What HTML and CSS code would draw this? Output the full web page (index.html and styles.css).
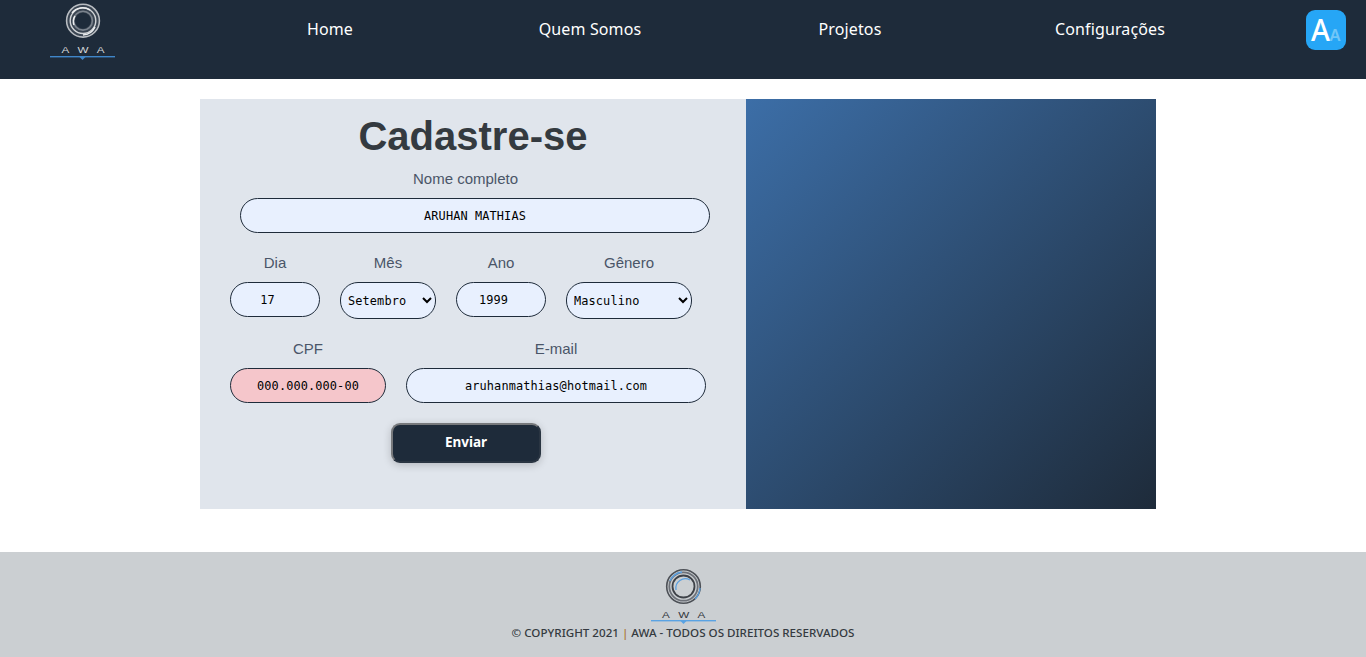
FILE: index.html
```html
<!DOCTYPE html>
<html lang="pt-BR">
<head>
<meta charset="utf-8">
<title>AWA - Cadastre-se</title>
<link rel="stylesheet" href="styles.css">
</head>
<body>
<header class="topbar">
  <a class="brand" href="#">
    <svg class="logo logo-light" width="65" height="62" viewBox="0 0 65 62">
      <circle class="band" cx="33" cy="20.7" r="12"/>
      <circle class="r1" cx="33" cy="20.7" r="16.4"/>
      <circle class="r2" cx="33" cy="20.7" r="12.8"/>
      <circle class="r3" cx="33" cy="20.7" r="9.4"/>
      <path class="r4" d="M22 13a13.500 13.500 0 0 1 18-3M45 27a14 14 0 0 1-12 8M24 25a10 10 0 0 1 1-9"/>
      <text class="wordmark" transform="translate(37.400 53.300) scale(1.3 1)" text-anchor="middle">AWA</text>
      <rect class="line" x="0" y="56" width="65" height="1.4"/>
      <path class="line" d="M29.500 57h6l-3 3z"/>
    </svg>
  </a>
  <nav class="menu">
    <a href="#">Home</a>
    <a href="#">Quem Somos</a>
    <a href="#">Projetos</a>
    <a href="#">Configurações</a>
  </nav>
  <button class="font-btn" type="button" aria-label="Tamanho da fonte">
    <svg width="40" height="40" viewBox="0 0 40 40">
      <rect width="40" height="40" rx="9" class="font-bg"/>
      <text class="big-a" x="5" y="30.500" textLength="19" lengthAdjust="spacingAndGlyphs">A</text>
      <text class="small-a" x="23.500" y="30.500" textLength="11" lengthAdjust="spacingAndGlyphs">A</text>
    </svg>
  </button>
</header>

<main class="page">
  <section class="card">
    <form class="form">
      <h1>Cadastre-se</h1>
      <div class="row row-name">
        <label class="field"><span class="name-label">Nome completo</span>
          <input class="w470" type="text" value="ARUHAN MATHIAS">
        </label>
      </div>
      <div class="row">
        <label class="field">Dia
          <input class="w90 num" type="text" value="17">
        </label>
        <label class="field">Mês
          <select class="w96"><option>Setembro</option></select>
        </label>
        <label class="field">Ano
          <input class="w90 num" type="text" value="1999">
        </label>
        <label class="field">Gênero
          <select class="w126"><option>Masculino</option></select>
        </label>
      </div>
      <div class="row">
        <label class="field">CPF
          <input class="w156 invalid" type="text" value="000.000.000-00">
        </label>
        <label class="field">E-mail
          <input class="w300" type="text" value="aruhanmathias@hotmail.com">
        </label>
      </div>
      <button class="submit" type="button">Enviar</button>
    </form>
    <div class="art"></div>
  </section>
</main>

<footer class="footer">
  <svg class="logo logo-dark" width="65" height="58" viewBox="0 0 65 58">
    <circle class="r1" cx="32.500" cy="20.500" r="16.800"/>
    <circle class="r2" cx="32.500" cy="20.500" r="14.200"/>
    <circle class="r3" cx="32.500" cy="20.500" r="11"/>
    <path class="r4" d="M19 15a15 15 0 0 1 12-9M44 33a17 17 0 0 0 5-11M25 24a9.500 9.500 0 0 1 14-10"/>
    <text class="wordmark" transform="translate(37 52) scale(1.3 1)" text-anchor="middle">AWA</text>
    <rect class="line" x="0" y="54" width="65" height="1.4"/>
    <path class="line" d="M29.500 55h6l-3 3z"/>
  </svg>
  <p>© COPYRIGHT 2021 <span class="sep">|</span> AWA - TODOS OS DIREITOS RESERVADOS</p>
</footer>
</body>
</html>
```
FILE: styles.css
```css
* { box-sizing: border-box; }
html, body { margin: 0; padding: 0; }
body { font-family: "Liberation Sans", Arial, sans-serif; background: #fff; }

.topbar { display: flex; align-items: flex-start; height: 79px; background: #1e2b3a; }
.brand { display: block; width: 200px; padding-left: 50px; }
.logo { display: block; }
.menu { display: flex; width: 1040px; padding-top: 18px; }
.menu a { flex: 1; text-align: center; font: 400 16px/22px "Noto Sans", sans-serif; letter-spacing: .12px; color: #fff; text-decoration: none; }
.font-btn { display: block; margin: 10px 0 0 66px; padding: 0; border: 0; background: none; width: 40px; height: 40px; }
.font-bg { fill: #26a6f6; }
.big-a { font: 500 30px "Noto Sans", sans-serif; fill: #fff; }
.small-a { font: 600 15.500px "Noto Sans", sans-serif; fill: #72c6f8; }

.logo circle, .logo path.r4 { fill: none; }
.wordmark { font: 400 9px "Liberation Sans", sans-serif; letter-spacing: 6.700px; }
.line { fill: #3f86c9; }
.logo-light .band { stroke: #3a4552; stroke-width: 8; }
.logo-light .r1 { stroke: #b9bdc2; stroke-width: 1.600; }
.logo-light .r2 { stroke: #d2d5d8; stroke-width: 1.400; }
.logo-light .r3 { stroke: #7b838d; stroke-width: 1.600; }
.logo-light .r4 { stroke: #eceef0; stroke-width: 1.500; }
.logo-light .wordmark { fill: #d4d6d9; }
.logo-dark .r1 { stroke: #4d5157; stroke-width: 1.600; }
.logo-dark .r2 { stroke: #6d7178; stroke-width: 1.800; }
.logo-dark .r3 { stroke: #3e4248; stroke-width: 1.800; }
.logo-dark .r4 { stroke: #5aa0e0; stroke-width: 1.300; }
.logo-dark .wordmark { fill: #33373d; }
.logo-dark .line { fill: #5aa3e3; }

.page { padding: 20px 0 43px 200px; }
.card { display: flex; width: 956px; height: 410px; }
.form { width: 546px; background: #e0e5ec; padding-top: 14px; }
.form h1 { margin: 0 0 11px; text-align: center; font-size: 40px; line-height: 46px; font-weight: 700; color: #343a40; }
.art { width: 410px; background: linear-gradient(to bottom right, #3c6ea7, #1e2b3a); }

.row { display: flex; align-items: flex-start; gap: 20px; padding-left: 30px; margin-bottom: 21px; }
.row-name { padding-left: 40px; }
.name-label { margin-right: 19px; }
.field { display: flex; flex-direction: column; align-items: center; gap: 11px; font-size: 15px; line-height: 17px; color: #4a5568; }
.field input, .field select {
  height: 35px; border: 1px solid #1e2b3a; border-radius: 18px; background: #e8f0fe; color: #000;
  font: 11.900px "DejaVu Sans Mono", monospace; letter-spacing: .12px; text-align: center; outline: 0;
}
.field select { height: 37px; text-align: left; padding: 0 0 0 3px; }
.w470 { width: 470px; }
.w90 { width: 90px; }
.w96 { width: 96px; }
.w126 { width: 126px; }
.w156 { width: 156px; }
.w300 { width: 300px; }
.num { padding: 0 16px 0 1px; }
.field .invalid { background: #f5c6cb; }

.submit {
  display: block; width: 150px; height: 40px; margin: -1px 0 0 191px; padding: 0 0 2px;
  border: 2px solid; border-color: #77797c #2a3542 #2a3542 #77797c; border-radius: 9px;
  background: #1e2b3a; color: #fff;
  font: 700 13.500px "Noto Sans", sans-serif; box-shadow: 0 2px 8px rgba(0,0,0,.2);
}

.footer { display: flex; flex-direction: column; align-items: center; height: 105px; padding-top: 14px; background: #cbcfd2; }
.footer p { margin: 1px 0 0; font: 500 11.600px/16px "Noto Sans", sans-serif; color: #343a40; }
.sep { color: #a8702c; }
```
